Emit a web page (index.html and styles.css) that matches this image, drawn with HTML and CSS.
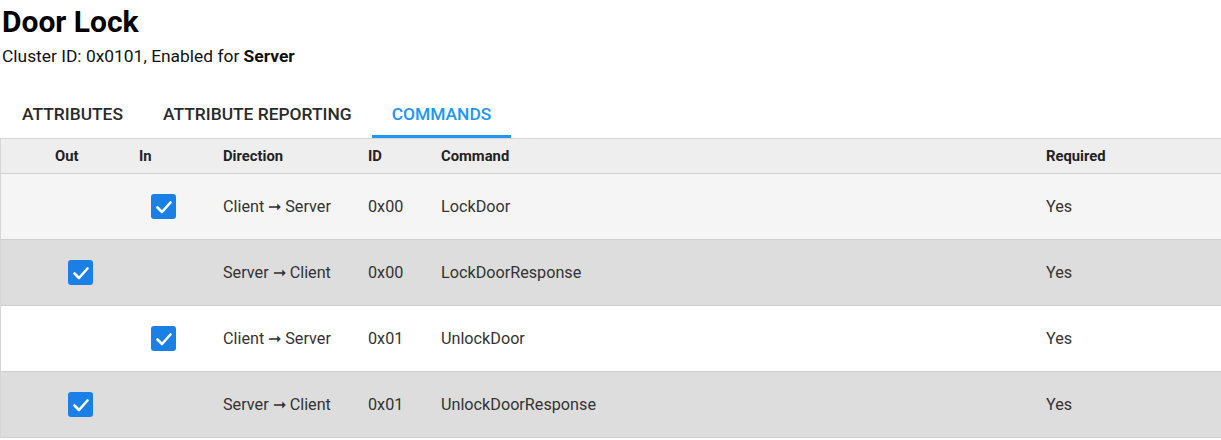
FILE: index.html
```html
<!DOCTYPE html>
<html>
<head>
<meta charset="utf-8">
<link rel="stylesheet" href="styles.css">
</head>
<body>
<div class="page">
  <header class="head">
    <h1 class="title">Door Lock</h1>
    <p class="sub">Cluster ID: 0x0101, Enabled for <b>Server</b></p>
  </header>
  <nav class="tabs">
    <div class="tab">ATTRIBUTES</div>
    <div class="tab">ATTRIBUTE REPORTING</div>
    <div class="tab active">COMMANDS</div>
  </nav>
  <div class="table">
    <div class="row hdr">
      <div class="c c-out">Out</div>
      <div class="c c-in">In</div>
      <div class="c">Direction</div>
      <div class="c">ID</div>
      <div class="c">Command</div>
      <div class="c">Required</div>
    </div>
    <div class="row r1">
      <div class="c c-outbox"></div>
      <div class="c c-inbox"><span class="cb"><svg viewBox="0 0 24 24" width="24" height="24"><path d="M5.5 12.5 L10 17 L18.5 7.5" fill="none" stroke="#fff" stroke-width="2.6" stroke-linecap="round" stroke-linejoin="round"/></svg></span></div>
      <div class="c">Client ➞ Server</div>
      <div class="c">0x00</div>
      <div class="c">LockDoor</div>
      <div class="c">Yes</div>
    </div>
    <div class="row r2">
      <div class="c c-outbox"><span class="cb"><svg viewBox="0 0 24 24" width="24" height="24"><path d="M5.5 12.5 L10 17 L18.5 7.5" fill="none" stroke="#fff" stroke-width="2.6" stroke-linecap="round" stroke-linejoin="round"/></svg></span></div>
      <div class="c c-inbox"></div>
      <div class="c">Server ➞ Client</div>
      <div class="c">0x00</div>
      <div class="c">LockDoorResponse</div>
      <div class="c">Yes</div>
    </div>
    <div class="row r3">
      <div class="c c-outbox"></div>
      <div class="c c-inbox"><span class="cb"><svg viewBox="0 0 24 24" width="24" height="24"><path d="M5.5 12.5 L10 17 L18.5 7.5" fill="none" stroke="#fff" stroke-width="2.6" stroke-linecap="round" stroke-linejoin="round"/></svg></span></div>
      <div class="c">Client ➞ Server</div>
      <div class="c">0x01</div>
      <div class="c">UnlockDoor</div>
      <div class="c">Yes</div>
    </div>
    <div class="row r4">
      <div class="c c-outbox"><span class="cb"><svg viewBox="0 0 24 24" width="24" height="24"><path d="M5.5 12.5 L10 17 L18.5 7.5" fill="none" stroke="#fff" stroke-width="2.6" stroke-linecap="round" stroke-linejoin="round"/></svg></span></div>
      <div class="c c-inbox"></div>
      <div class="c">Server ➞ Client</div>
      <div class="c">0x01</div>
      <div class="c">UnlockDoorResponse</div>
      <div class="c">Yes</div>
    </div>
  </div>
</div>
</body>
</html>
```

FILE: styles.css
```css
html, body {
  margin: 0;
  padding: 0;
  background: #fff;
}
body {
  font-family: Roboto, "Liberation Sans", sans-serif;
  color: #212121;
}
.page {
  width: 1221px;
}
.head {
  padding: 2px 0 0 2px;
}
.title {
  margin: 0;
  font-size: 30px;
  font-weight: 700;
  line-height: 40px;
  color: #000;
}
.sub {
  margin: 0;
  font-size: 17.4px;
  line-height: 28px;
  color: #111;
}
.sub b {
  font-weight: 700;
}
.tabs {
  display: flex;
  margin-top: 20px;
  padding-left: 2px;
}
.tab {
  padding: 4px 20px 0;
  height: 48px;
  line-height: 41px;
  font-size: 17.4px;
  font-weight: 500;
  color: #2a2a2a;
  box-sizing: border-box;
  border-bottom: 3px solid transparent;
}
.tab.active {
  color: #2196f3;
  border-bottom-color: #2196f3;
}
.table {
  border-top: 1px solid #d6d6d6;
  border-left: 1px solid #d6d6d6;
  width: 1221px;
  box-sizing: border-box;
}
.row {
  display: grid;
  grid-template-columns: 125px 84px 145px 73px 605px 1fr;
  align-items: center;
  border-bottom: 1px solid #cfcfcf;
  height: 66px;
  box-sizing: border-box;
  font-size: 16.2px;
  color: #333;
}
.row.hdr {
  height: 35px;
  background: #eeeeee;
  font-size: 14.8px;
  font-weight: 700;
  color: #222;
}
.r1 { background: #f5f5f5; }
.r2 { background: #dddddd; }
.r3 { background: #ffffff; }
.r4 { background: #dddddd; }
.c {
  padding-left: 13px;
  white-space: nowrap;
}
.hdr .c-out {
  padding-left: 54px;
}
.c-outbox {
  padding-left: 67px;
  display: flex;
  align-items: center;
}
.c-inbox {
  padding-left: 25px;
  display: flex;
  align-items: center;
}
.cb {
  display: inline-flex;
  width: 25px;
  height: 25px;
  border-radius: 3px;
  background: #1a80e6;
  align-items: center;
  justify-content: center;
}
.cb svg {
  display: block;
}
```
